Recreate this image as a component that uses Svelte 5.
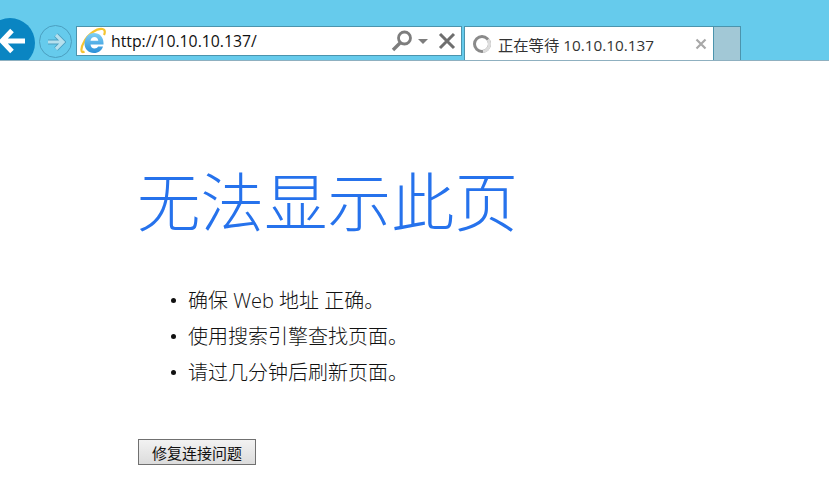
<script>
    let tips = ['确保 Web 地址 正确。', '使用搜索引擎查找页面。', '请过几分钟后刷新页面。'];
</script>

<div class="browser">
    <div class="toolbar">
        <div class="back">
            <svg width="27" height="26" viewBox="0 0 27 26">
                <path d="M13 2.500 L3 13 L13 23.500 M4 13 H26" fill="none" stroke="#fff" stroke-width="5" />
            </svg>
        </div>
        <div class="forward">
            <svg width="20" height="18" viewBox="0 0 20 18">
                <path d="M10 2 L17 9 L10 16 M16 9 H2" fill="none" stroke="#4b9fc0" stroke-width="5" />
                <path d="M10 2 L17 9 L10 16 M16 9 H2" fill="none" stroke="#b5e0ee" stroke-width="3.200" />
            </svg>
        </div>
        <div class="address">
            <svg class="ie" width="26" height="28" viewBox="0 0 26 28">
                <defs>
                    <linearGradient id="ie-blue" x1="0" y1="0" x2="0" y2="1">
                        <stop offset="0" stop-color="#7fd0f5" />
                        <stop offset="1" stop-color="#2a8fd8" />
                    </linearGradient>
                </defs>
                <path d="M4.500 24.500 C0 27 1 20 4 15 C8 7 17 1 22.500 2 C25.500 2.500 25 6 24 8" fill="none" stroke="#f4c430" stroke-width="2.200" />
                <path d="M5 13.500 C6 9 9.500 6 14 6 C19.500 6 23.500 10 23.500 16 V17.500 H10.500 C10.800 20 12.300 21.500 14.500 21.500 C16.200 21.500 17.500 20.700 18.200 19.500 H23 C21.800 23.500 18.500 26 14 26 C8.500 26 4.500 22 4.500 16.500 C4.500 15.500 4.700 14.500 5 13.500 Z M10.500 13.800 H18.300 C18 11.500 16.500 10 14.400 10 C12.300 10 10.800 11.500 10.500 13.800 Z" fill="url(#ie-blue)" fill-rule="evenodd" />
            </svg>
            <span class="url">http://10.10.10.137/</span>
            <svg class="search" width="22" height="22" viewBox="0 0 22 22">
                <circle cx="13.500" cy="8" r="6" fill="none" stroke="#7d7d7d" stroke-width="2.800" />
                <path d="M9.500 12.500 L2 20" stroke="#7d7d7d" stroke-width="3.400" />
            </svg>
            <svg class="caret" width="10" height="5" viewBox="0 0 10 5">
                <path d="M0 0 H10 L5 5 Z" fill="#7d7d7d" />
            </svg>
            <svg class="stop" width="18" height="18" viewBox="0 0 18 18">
                <path d="M2 2 L16 16 M16 2 L2 16" stroke="#6e6e6e" stroke-width="3" />
            </svg>
        </div>
        <div class="tab">
            <svg class="spinner" width="20" height="20" viewBox="0 0 20 20">
                <circle cx="10" cy="10" r="7.500" fill="none" stroke="#8a8a8a" stroke-width="3" />
                <path d="M16 5.500 A7.500 7.500 0 0 1 11 17.400" fill="none" stroke="#dcdcdc" stroke-width="3" />
            </svg>
            <span class="tab-title">正在等待 10.10.10.137</span>
            <svg class="tab-close" width="12" height="12" viewBox="0 0 12 12">
                <path d="M1.500 1.500 L10.500 10.500 M10.500 1.500 L1.500 10.500" stroke="#a8a8a8" stroke-width="2.200" />
            </svg>
        </div>
        <div class="new-tab"></div>
    </div>

    <main>
        <h1>无法显示此页</h1>
        <ul>
            {#each tips as tip}
                <li>{tip}</li>
            {/each}
        </ul>
        <button>修复连接问题</button>
    </main>
</div>

<style>
    :global(body) {
        margin: 0;
        background: #fff;
    }

    .browser {
        width: 829px;
        height: 497px;
        overflow: hidden;
        font-family: "Open Sans", "Noto Sans CJK SC", sans-serif;
    }

    .toolbar {
        height: 61px;
        box-sizing: border-box;
        background: #66cbec;
        border-bottom: 1px solid #8fb0c0;
        display: flex;
        align-items: flex-start;
        padding-top: 26px;
        overflow: hidden;
    }

    .back {
        width: 50px;
        height: 50px;
        border-radius: 50%;
        background: #0a85c2;
        margin: -8px 0 0 -15px;
        flex: none;
        display: flex;
        align-items: flex-start;
        justify-content: flex-end;
        padding: 10px 9px 0 0;
        box-sizing: border-box;
    }

    .forward {
        width: 33px;
        height: 33px;
        box-sizing: border-box;
        border: 1px solid #4b9fc0;
        border-radius: 50%;
        margin: -1px 0 0 4px;
        flex: none;
        display: flex;
        align-items: center;
        justify-content: center;
    }

    .address {
        width: 386px;
        height: 30px;
        box-sizing: border-box;
        margin-left: 4px;
        background: #fff;
        border: 1px solid #4b94ad;
        display: flex;
        align-items: center;
        flex: none;
    }

    .ie {
        margin-left: 3px;
        flex: none;
    }

    .url {
        margin-left: 5px;
        font-size: 15.800px;
        color: #111;
        flex: 1;
    }

    .search {
        flex: none;
    }

    .caret {
        margin-left: 5px;
        flex: none;
    }

    .stop {
        margin: 0 5px 0 10px;
        flex: none;
    }

    .tab {
        width: 250px;
        height: 35px;
        box-sizing: border-box;
        margin-left: 2px;
        background: #fff;
        border: 1px solid #4b94ad;
        border-bottom: none;
        display: flex;
        align-items: center;
        flex: none;
    }

    .spinner {
        margin-left: 7px;
        flex: none;
    }

    .tab-title {
        margin-left: 6px;
        font-size: 15.300px;
        color: #333;
        flex: 1;
    }

    .tab-close {
        margin-right: 6px;
        flex: none;
    }

    .new-tab {
        width: 27px;
        height: 34px;
        box-sizing: border-box;
        background: #a2c8d6;
        border: 1px solid #4b94ad;
        border-left: none;
        border-bottom: none;
        flex: none;
    }

    main {
        padding: 98px 0 0 137px;
    }

    h1 {
        margin: 0;
        font-size: 63.500px;
        line-height: 86px;
        font-weight: 300;
        color: #2672ec;
    }

    ul {
        list-style: none;
        margin: 38px 0 0 1px;
        padding: 0 0 0 50px;
    }

    li {
        position: relative;
        font-size: 20px;
        font-weight: 300;
        line-height: 36px;
        color: #111;
    }

    li::before {
        content: "";
        position: absolute;
        left: -17px;
        top: 15px;
        width: 5px;
        height: 5px;
        border-radius: 50%;
        background: #111;
    }

    button {
        display: block;
        width: 118px;
        height: 26px;
        margin: 48px 0 0 1px;
        padding: 0;
        box-sizing: border-box;
        border: 1px solid #707070;
        background: linear-gradient(#f2f2f2, #dcdcdc);
        font-family: inherit;
        font-size: 15px;
        color: #111;
    }
</style>
